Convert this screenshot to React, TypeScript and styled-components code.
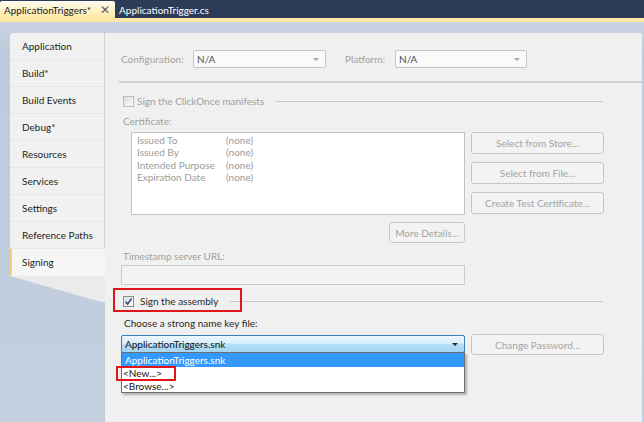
import styled, { createGlobalStyle } from 'styled-components'

const GlobalStyle = createGlobalStyle`
  html, body {
    margin: 0;
    padding: 0;
    background: #ffffff;
  }
  body {
    font-family: Lato, 'Open Sans', sans-serif;
    font-size: 10px;
  }
`

const Frame = styled.div`
  width: 644px;
  height: 422px;
  display: flex;
  flex-direction: column;
  overflow: hidden;
  background: #c3cfdf;
`

const TabStrip = styled.div`
  height: 18px;
  flex-shrink: 0;
  display: flex;
  align-items: flex-end;
  background: #2b3b58;
`

const DocTab = styled.div<{ $active?: boolean }>`
  height: 17px;
  display: flex;
  align-items: center;
  gap: 9px;
  padding: 0 5px 0 4px;
  font-size: 10px;
  color: ${(p) => (p.$active ? '#1b1b1b' : '#ffffff')};
  background: ${(p) => (p.$active ? 'linear-gradient(#fffcf0, #ffe8a4)' : 'transparent')};
  border-radius: 2px 2px 0 0;
`

const CloseMark = styled.span`
  font-size: 12px;
  color: #555a66;
`

const YellowRule = styled.div`
  height: 4px;
  flex-shrink: 0;
  background: #ffe8a4;
`

const Body = styled.div`
  flex: 1;
  display: flex;
  padding: 11px 2px 0 10px;
  background: linear-gradient(#c9d3e2, #bfcbdc 30px, #c3cfdf);
`

const Sidebar = styled.div`
  width: 95px;
  display: flex;
  flex-direction: column;
`

const SideTab = styled.div<{ $selected?: boolean; $first?: boolean }>`
  height: 27px;
  box-sizing: border-box;
  display: flex;
  align-items: center;
  padding-left: ${(p) => (p.$selected ? '10px' : '12px')};
  color: #1e1e1e;
  font-size: 10px;
  background: ${(p) => (p.$selected ? '#f6f6f6' : '#f1f1f1')};
  border-bottom: 1px solid ${(p) => (p.$selected ? 'transparent' : '#e6e6e6')};
  border-right: 1px solid ${(p) => (p.$selected ? 'transparent' : '#d2d2d2')};
  border-left: ${(p) => (p.$selected ? '2px solid #f3d27a' : 'none')};
  border-top-left-radius: ${(p) => (p.$first ? '4px' : '0')};
`

const TabTail = styled.div`
  height: 26px;
  background: #ebebeb;
  clip-path: polygon(0 0, 100% 0, 100% 100%, 96% 100%);
`

const Content = styled.div`
  flex: 1;
  display: flex;
  flex-direction: column;
  padding: 17px 0 0 16px;
  background: #f0f0f0;
  color: #a0a0a0;
`

const ConfigRow = styled.div`
  height: 18px;
  display: flex;
  align-items: center;
`

const FieldLabel = styled.span<{ $width: number; $gap?: number }>`
  width: ${(p) => p.$width}px;
  margin-left: ${(p) => p.$gap ?? 0}px;
  color: #a2a2a2;
`

const Select = styled.div<{ $width: number }>`
  width: ${(p) => p.$width}px;
  height: 18px;
  box-sizing: border-box;
  display: flex;
  align-items: center;
  justify-content: space-between;
  padding: 0 6px 0 3px;
  border: 1px solid #c5c5c5;
  border-radius: 2px;
  background: #fafafa;
  color: #505050;
`

const Arrow = styled.span<{ $dark?: boolean }>`
  width: 0;
  height: 0;
  border-left: 3px solid transparent;
  border-right: 3px solid transparent;
  border-top: 3px solid ${(p) => (p.$dark ? '#222' : '#a8a8a8')};
`

const Separator = styled.div`
  height: 2px;
  margin: 13px 0 0 -2px;
  background: #cfcfcf;
`

const GroupRow = styled.div<{ $top: number }>`
  position: relative;
  width: 480px;
  height: 14px;
  margin-top: ${(p) => p.$top}px;
  display: flex;
  align-items: center;
  padding-left: 2px;
`

const Check = styled.span<{ $on?: boolean }>`
  width: 11px;
  height: 11px;
  box-sizing: border-box;
  flex-shrink: 0;
  display: flex;
  align-items: center;
  justify-content: center;
  border: 1px solid ${(p) => (p.$on ? '#8a8d92' : '#bdbdbd')};
  background: linear-gradient(135deg, #dedede, #fbfbfb);
  margin-right: ${(p) => (p.$on ? '6px' : '3px')};
`

const GroupTitle = styled.span<{ $enabled?: boolean }>`
  color: ${(p) => (p.$enabled ? '#2a2a2a' : '#a0a0a0')};
  font-size: 10px;
`

const GroupLine = styled.span`
  flex: 1;
  height: 1px;
  margin-left: 12px;
  background: #c8c8c8;
`

const Annotation = styled.span`
  position: absolute;
  border: 2px solid #e0161c;
  pointer-events: none;
`

const Caption = styled.div<{ $top: number; $dark?: boolean }>`
  height: 13px;
  line-height: 13px;
  margin-top: ${(p) => p.$top}px;
  padding-left: ${(p) => (p.$dark ? '3px' : '2px')};
  color: ${(p) => (p.$dark ? '#2a2a2a' : '#a0a0a0')};
`

const CertArea = styled.div`
  display: flex;
  gap: 6px;
  margin-top: 4px;
`

const CertBox = styled.div`
  width: 334px;
  height: 83px;
  margin-left: 10px;
  box-sizing: border-box;
  padding: 1px 0 0 5px;
  border: 1px solid #c2c2c2;
  background: #ffffff;
  display: grid;
  grid-template-columns: 89px 1fr;
  grid-auto-rows: 12.4px;
  align-content: start;
  line-height: 12.4px;
  color: #9c9c9c;
`

const ButtonColumn = styled.div`
  display: flex;
  flex-direction: column;
  gap: 8px;
`

const Button = styled.div<{ $width: number; $height?: number }>`
  width: ${(p) => p.$width}px;
  height: ${(p) => p.$height ?? 22}px;
  box-sizing: border-box;
  display: flex;
  align-items: center;
  justify-content: center;
  border: 1px solid #c4c6c8;
  border-radius: 3px;
  background: #f3f3f3;
  color: #a4a4a4;
`

const DetailsRow = styled.div`
  width: 344px;
  display: flex;
  justify-content: flex-end;
  margin-top: 7px;
`

const TextBox = styled.div`
  width: 344px;
  height: 20px;
  box-sizing: border-box;
  margin-top: 2px;
  border: 1px solid #cacaca;
  background: #f3f3f3;
`

const KeyRow = styled.div`
  display: flex;
  align-items: flex-start;
  gap: 6px;
  margin-top: 4px;
`

const ComboWrap = styled.div`
  position: relative;
  width: 344px;
  margin-top: 1px;
`

const Combo = styled.div`
  height: 18px;
  box-sizing: border-box;
  display: flex;
  align-items: center;
  justify-content: space-between;
  padding: 0 6px 0 3px;
  border: 1px solid #3c7fb1;
  border-radius: 2px;
  background: linear-gradient(#edf7fd 0%, #d7effc 45%, #b0ddf6 55%, #a4d6f3 100%);
  color: #111111;
`

const DropList = styled.div`
  position: absolute;
  top: 17px;
  left: 0;
  width: 344px;
  box-sizing: border-box;
  border: 1px solid #6f6f6f;
  background: #ffffff;
  color: #111111;
  box-shadow: 2px 2px 2px rgba(0, 0, 0, 0.25);
  z-index: 2;
`

const DropItem = styled.div<{ $highlighted?: boolean }>`
  position: relative;
  height: ${(p) => (p.$highlighted ? '14px' : '12.5px')};
  line-height: ${(p) => (p.$highlighted ? '14px' : '12.5px')};
  padding-left: ${(p) => (p.$highlighted ? '3px' : '1px')};
  background: ${(p) => (p.$highlighted ? '#3399ff' : 'transparent')};
  color: ${(p) => (p.$highlighted ? '#ffffff' : '#111111')};
`

const CheckMark = () => (
  <svg width="9" height="9" viewBox="0 0 9 9">
    <path d="M1.5 4.6 L3.6 7 L7.6 1.6" fill="none" stroke="#2d4f86" strokeWidth="1.6" />
  </svg>
)

const sideTabs = [
  'Application',
  'Build*',
  'Build Events',
  'Debug*',
  'Resources',
  'Services',
  'Settings',
  'Reference Paths',
  'Signing',
]

const certRows = [
  ['Issued To', '(none)'],
  ['Issued By', '(none)'],
  ['Intended Purpose', '(none)'],
  ['Expiration Date', '(none)'],
]

const App = () => {
  return (
    <Frame>
      <GlobalStyle />
      <TabStrip>
        <DocTab $active>
          ApplicationTriggers*
          <CloseMark>✕</CloseMark>
        </DocTab>
        <DocTab>ApplicationTrigger.cs</DocTab>
      </TabStrip>
      <YellowRule />

      <Body>
        <Sidebar>
          {sideTabs.map((name, i) => (
            <SideTab key={name} $first={i === 0} $selected={name === 'Signing'}>
              {name}
            </SideTab>
          ))}
          <TabTail />
        </Sidebar>

        <Content>
          {/* configuration / platform */}
          <ConfigRow>
            <FieldLabel $width={72}>Configuration:</FieldLabel>
            <Select $width={133}>
              N/A
              <Arrow />
            </Select>
            <FieldLabel $width={50} $gap={19}>Platform:</FieldLabel>
            <Select $width={132}>
              N/A
              <Arrow />
            </Select>
          </ConfigRow>
          <Separator />

          {/* click once */}
          <GroupRow $top={11}>
            <Check />
            <GroupTitle>Sign the ClickOnce manifests</GroupTitle>
            <GroupLine />
          </GroupRow>
          <Caption $top={7}>Certificate:</Caption>
          <CertArea>
            <CertBox>
              {certRows.map(([k, v]) => [<span key={k}>{k}</span>, <span key={k + 'v'}>{v}</span>])}
            </CertBox>
            <ButtonColumn>
              <Button $width={133}>Select from Store...</Button>
              <Button $width={133}>Select from File...</Button>
              <Button $width={133}>Create Test Certificate...</Button>
            </ButtonColumn>
          </CertArea>
          <DetailsRow>
            <Button $width={76} $height={21}>More Details...</Button>
          </DetailsRow>
          <Caption $top={7}>Timestamp server URL:</Caption>
          <TextBox />

          {/* strong name */}
          <GroupRow $top={9}>
            <Check $on>
              <CheckMark />
            </Check>
            <GroupTitle $enabled>Sign the assembly</GroupTitle>
            <GroupLine />
            <Annotation style={{ left: -8, top: -6, width: 125, height: 20 }} />
          </GroupRow>
          <Caption $top={9} $dark>Choose a strong name key file:</Caption>
          <KeyRow>
            <ComboWrap>
              <Combo>
                ApplicationTriggers.snk
                <Arrow $dark />
              </Combo>
              <DropList>
                <DropItem $highlighted>ApplicationTriggers.snk</DropItem>
                <DropItem>
                  &lt;New...&gt;
                  <Annotation style={{ left: -6, top: -1, width: 56, height: 11 }} />
                </DropItem>
                <DropItem>&lt;Browse...&gt;</DropItem>
              </DropList>
            </ComboWrap>
            <Button $width={133} $height={21}>Change Password...</Button>
          </KeyRow>
        </Content>
      </Body>
    </Frame>
  )
}

export default App
